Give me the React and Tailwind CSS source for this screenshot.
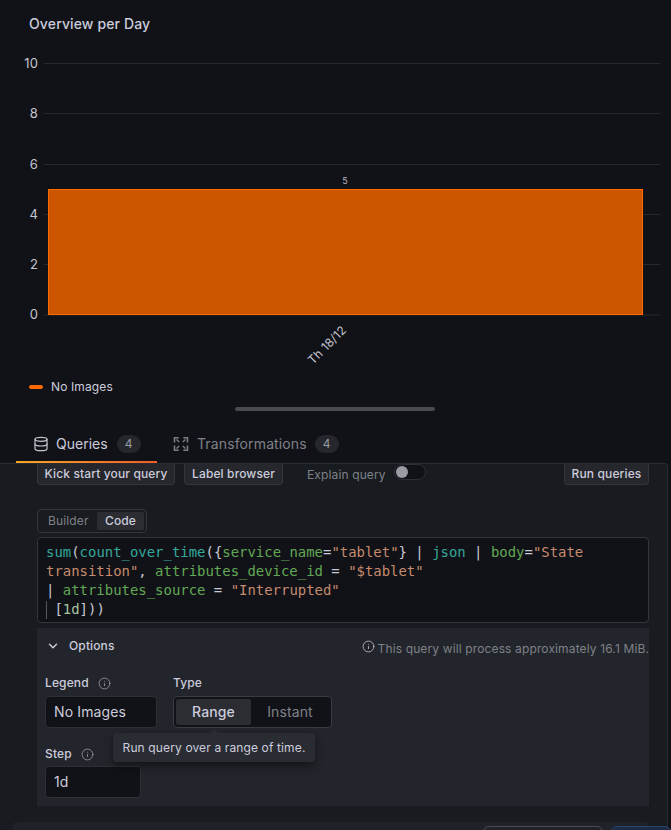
import { ChevronDown, Database, Info } from 'lucide-react';

const TransformIcon = () => (
  <svg width="16" height="16" viewBox="0 0 16 16" fill="none" stroke="#7a7d85" strokeWidth="1.6">
    <path d="M1.5 6.5V1.8h4.2M10.3 1.8h4.2v4.7M14.5 9.5v4.7h-4.2M5.7 14.2H1.5V9.5" />
    <path d="M3.5 3.5 6.2 6M12.5 3.5 9.8 6M12.5 12.5 9.8 10M3.5 12.5 6.2 10" strokeWidth="1.4" />
  </svg>
);

const OverviewChart = () => {
  const ticks = [
    { label: '10', y: 63.5, ty: 68 },
    { label: '8', y: 113.5, ty: 118 },
    { label: '6', y: 164.5, ty: 169 },
    { label: '4', y: 214.5, ty: 219 },
    { label: '2', y: 264.5, ty: 269 },
    { label: '0', y: 315, ty: 319 },
  ];

  return (
    <svg width="671" height="324" viewBox="0 48 671 324" className="block">
      {ticks.map(t => (
        <g key={t.label}>
          <line x1="44" x2="660" y1={t.y} y2={t.y} stroke="#26282d" />
          <text x="38" y={t.ty} textAnchor="end" fontSize="13" fill="#c4c5d0">{t.label}</text>
        </g>
      ))}
      <rect x="48.5" y="189.5" width="594" height="125" fill="#cc5500" stroke="#ff6a00" />
      <text x="345" y="184" textAnchor="middle" fontSize="9" fill="#b5b6c2">5</text>
      <text x="347" y="331" textAnchor="end" fontSize="12" fill="#c4c5d0" transform="rotate(-45 347 331)">Th 18/12</text>
    </svg>
  );
};

const Label = ({ children, iconClass }) => (
  <div className="flex items-center h-[16px] text-xs font-medium text-[#ccccdc]">
    {children}
    {iconClass && <Info size={13} strokeWidth={1.5} className={`text-[#9a9ba5] ${iconClass}`} />}
  </div>
);

const TextBox = ({ value, className }) => (
  <div className={`h-[32px] flex items-center pl-[8px] bg-[#111217] border border-[#2e3036] rounded-[4px] text-sm text-[#ccccdc] ${className}`}>
    {value}
  </div>
);

const Tok = ({ c, children }) => <span style={{ color: c }}>{children}</span>;

const teal = '#33a89b';
const green = '#62a855';
const salmon = '#c68b6e';
const plain = '#c8c9d4';

export default function App() {
  return (
    <div className="w-[671px] h-[830px] overflow-hidden bg-[#111217] font-['Inter',sans-serif] tracking-[0.13px]">
      {/* Panel */}
      <div className="h-12 flex items-center pl-[29px] text-sm font-medium text-[#ccccdc]">Overview per Day</div>
      <OverviewChart />
      <div className="h-[30px] pl-[29px] flex items-center text-xs text-[#ccccdc]">
        <span className="w-[14px] h-[4px] rounded-full bg-[#ff6a00] mr-[8px]" />
        No Images
      </div>
      <div className="ml-[235px] mt-[5px] w-[200px] h-1 rounded-full bg-[#4a4b52]" />

      {/* Tabs */}
      <div className="h-[52px] pl-[16px] flex items-end">
        <div className="relative w-[141px] h-[36px] flex items-center pl-[17px] pb-[2px] text-sm text-[#ccccdc] tracking-normal">
          <Database size={16} strokeWidth={1.8} className="text-[#c4c5d0]" />
          <span className="ml-[7px]">Queries</span>
          <span className="ml-[9px] w-[24px] h-[18px] rounded-full bg-[#25272c] flex items-center justify-center text-xs text-[#9a9ba5]">4</span>
          <div className="absolute left-0 right-0 bottom-0 h-[2px] bg-gradient-to-r from-[#f5a623] to-[#f05a28]" />
        </div>
        <div className="h-[36px] flex items-center pl-[16px] pb-[2px] text-sm text-[#7f8188]">
          <TransformIcon />
          <span className="ml-[8px]">Transformations</span>
          <span className="ml-[8px] w-[24px] h-[18px] rounded-full bg-[#25272c] flex items-center justify-center text-xs text-[#9a9ba5]">4</span>
        </div>
      </div>

      {/* Query editor */}
      <div className="w-[668px] h-[367px] bg-[#181b1f] border-t border-r border-[#2a2c31] rounded-tr-[4px]">
        <div className="pl-[37px] w-[649px] flex items-start">
          <div className="w-[138px] h-[21px] flex items-center justify-center bg-[#25272d] border border-t-0 border-[#33353b] rounded-b-[4px] text-xs font-medium text-[#ccccdc]">
            Kick start your query
          </div>
          <div className="ml-[9px] w-[99px] h-[21px] flex items-center justify-center bg-[#25272d] border border-t-0 border-[#33353b] rounded-b-[4px] text-xs font-medium text-[#ccccdc]">
            Label browser
          </div>
          <div className="ml-[24px] w-[79px] h-[21px] flex items-center text-xs text-[#7f8188] whitespace-nowrap">Explain query</div>
          <div className="ml-[8px] shrink-0 w-[32px] h-[16px] flex items-center pl-[1px] bg-[#111217] border border-[#2e3036] rounded-full">
            <span className="w-[12px] h-[12px] rounded-full bg-[#9b9ba6]" />
          </div>
          <div className="ml-auto w-[85px] h-[21px] flex items-center justify-center bg-[#25272d] border border-t-0 border-[#33353b] rounded-b-[4px] text-xs font-medium text-[#ccccdc]">
            Run queries
          </div>
        </div>

        <div className="ml-[37px] mt-[24px] w-[110px] h-[24px] flex items-center px-[2px] border border-[#33353b] rounded-[4px] text-xs">
          <span className="w-[57px] pl-[8px] text-[#7f8188]">Builder</span>
          <span className="w-[47px] h-[18px] flex items-center justify-center bg-[#2b2d33] rounded-[2px] font-medium text-[#ccccdc]">Code</span>
        </div>

        <div className="ml-[37px] mt-[4px] w-[612px] h-[86px] pt-[5px] pl-[8px] bg-[#111217] border border-[#33353b] rounded-[4px] font-['DejaVu_Sans_Mono',monospace] text-[13.95px] leading-[19px] whitespace-pre tracking-normal">
          <div>
            <Tok c={teal}>sum</Tok><Tok c={plain}>(</Tok><Tok c={teal}>count_over_time</Tok><Tok c={plain}>({'{'}</Tok>
            <Tok c={green}>service_name</Tok><Tok c={plain}>=</Tok><Tok c={salmon}>"tablet"</Tok><Tok c={plain}>{'}'} | </Tok>
            <Tok c={teal}>json</Tok><Tok c={plain}> | </Tok><Tok c={green}>body</Tok><Tok c={plain}>=</Tok><Tok c={salmon}>"State</Tok>
          </div>
          <div>
            <Tok c={salmon}>transition"</Tok><Tok c={plain}>, </Tok><Tok c={green}>attributes_device_id</Tok><Tok c={plain}> = </Tok><Tok c={salmon}>"$tablet"</Tok>
          </div>
          <div>
            <Tok c={plain}>| </Tok><Tok c={green}>attributes_source</Tok><Tok c={plain}> = </Tok><Tok c={salmon}>"Interrupted"</Tok>
          </div>
          <div className="relative pl-[8.4px]">
            <span className="absolute left-0 top-[1px] bottom-0 w-px bg-[#55575e]" />
            <Tok c={plain}>[</Tok><Tok c="#a9c4a0">1d</Tok><Tok c={plain}>]))</Tok>
          </div>
        </div>

        {/* Options */}
        <div className="relative ml-[37px] mt-[5px] w-[612px] h-[178px] bg-[#22252b]">
          <div className="h-[36px] flex items-center pl-[9px] text-xs font-medium text-[#ccccdc]">
            <ChevronDown size={14} strokeWidth={2.5} className="text-[#ccccdc]" />
            <span className="ml-[9px]">Options</span>
            <div className="ml-auto mt-[5px] flex items-center font-normal text-[#7f8188] whitespace-nowrap">
              <Info size={13} strokeWidth={1.5} className="mb-[4px] mr-[3px] text-[#c4c5d0]" />
              This query will process approximately 16.1 MiB.
            </div>
          </div>

          <div className="mt-[11px] pl-[8px] flex">
            <div>
              <Label iconClass="ml-[9px]">Legend</Label>
              <TextBox value="No Images" className="mt-[5px] w-[112px]" />
            </div>
            <div className="ml-[16px]">
              <Label>Type</Label>
              <div className="mt-[5px] w-[159px] h-[32px] flex items-center px-[2px] bg-[#111217] border border-[#3a3c42] rounded-[4px] text-sm">
                <span className="w-[75px] h-[26px] flex items-center justify-center bg-[#2b2d33] rounded-[2px] font-medium text-[#ccccdc]">Range</span>
                <span className="flex-1 text-center text-[#7f8188]">Instant</span>
              </div>
            </div>
          </div>

          <div className="mt-[18px] pl-[8px]">
            <Label iconClass="ml-[9px]">Step</Label>
            <TextBox value="1d" className="mt-[4px] w-[96px]" />
          </div>

          {/* Tooltip */}
          <div className="absolute left-[76px] top-[105px] w-[202px] h-[29px] flex items-center justify-center bg-[#2a2c33] rounded-[4px] shadow-[0_4px_8px_rgba(0,0,0,0.45)] text-xs text-[#ccccdc] whitespace-nowrap">
            <span className="absolute left-[98px] -top-[3px] w-[6px] h-[6px] rotate-45 bg-[#2a2c33]" />
            Run query over a range of time.
          </div>
        </div>

        {/* Next query row */}
        <div className="ml-[13px] mt-[16px] w-[636px] h-[20px] bg-[#1f2228] rounded-t-[4px] flex items-start pt-[4px]">
          <div className="ml-[470px] shrink-0 w-[120px] h-[16px] border border-[#4a4c53] rounded-t-[6px]" />
          <div className="ml-[8px] shrink-0 w-[60px] h-[16px] bg-[#1c2a42] border border-[#2a4470] rounded-t-[6px]" />
        </div>
      </div>
    </div>
  );
}
